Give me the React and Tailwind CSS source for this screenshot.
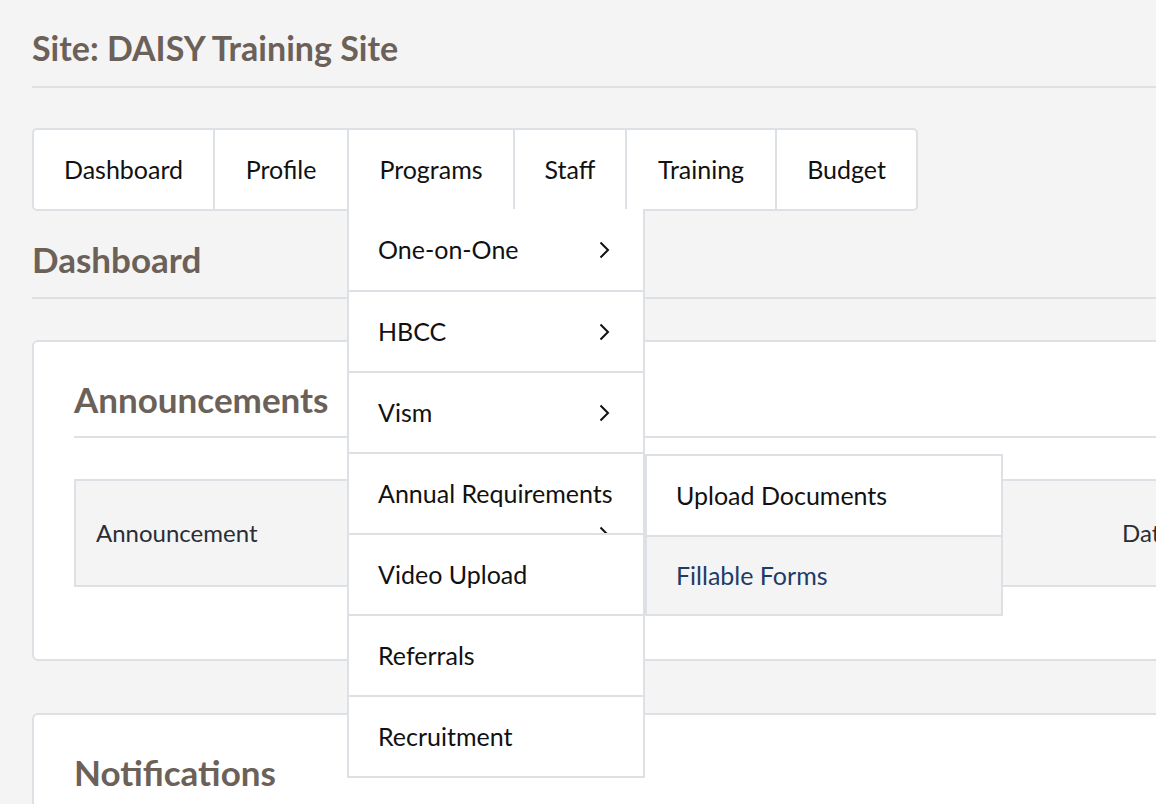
import React from "react";

const navItems = [
  { label: "Dashboard", w: "w-[179px]" },
  { label: "Profile", w: "w-[134px]" },
  { label: "Programs", w: "w-[166px]", open: true },
  { label: "Staff", w: "w-[112px]" },
  { label: "Training", w: "w-[150px]" },
  { label: "Budget", w: "w-[141px]" },
];

function Chevron({ className = "" }) {
  return (
    <svg width="11" height="18" viewBox="0 0 11 18" className={className} fill="none">
      <polyline points="1.5,1.5 9,9 1.5,16.5" stroke="#111" strokeWidth="2" />
    </svg>
  );
}

function ProgramsMenu() {
  const items = [
    { label: "One-on-One", sub: true },
    { label: "HBCC", sub: true },
    { label: "Vism", sub: true },
    { label: "Annual Requirements", wrapped: true },
    { label: "Video Upload" },
    { label: "Referrals" },
    { label: "Recruitment" },
  ];
  return (
    <div className="absolute left-[-2px] top-[79px] z-20 w-[298px] border-2 border-t-0 border-[#dde1e5] bg-white">
      {items.map((it, i) => (
        <div
          key={it.label}
          className={
            "relative flex h-[81px] items-center justify-between bg-white pl-[29px] pr-[33px] " +
            (i > 0 ? "border-t-2 border-[#dde1e5]" : "")
          }
        >
          <span className="whitespace-nowrap">{it.label}</span>
          {it.sub && <Chevron />}
          {it.wrapped && <Chevron className="absolute right-[33px] top-[72px]" />}
          {it.wrapped && (
            <div className="absolute left-[296px] top-0 z-30 w-[358px] border-2 border-[#dde1e5] bg-white">
              <div className="flex h-[79px] items-center pl-[29px]">Upload Documents</div>
              <div className="flex h-[79px] items-center border-t-2 border-[#dde1e5] bg-[#f4f4f4] pl-[29px] text-[#1d3c68]">
                Fillable Forms
              </div>
            </div>
          )}
        </div>
      ))}
    </div>
  );
}

export default function App() {
  return (
    <div
      className="h-[804px] w-[1156px] overflow-hidden bg-[#f4f4f4] text-[25px] text-[#111]"
      style={{ fontFamily: "Lato, 'Open Sans', sans-serif" }}
    >
      <div className="w-[1400px] pl-8 pt-6">
        <h1 className="border-b-2 border-[#dde1e5] pb-[14px] text-[34px] font-bold leading-[48px] text-[#6b6158]">
          Site: DAISY Training Site
        </h1>

        <nav className="mt-10 flex w-[886px] rounded-[5px] border-2 border-[#dde1e5] bg-white">
          {navItems.map((n, i) => (
            <div
              key={n.label}
              className={
                "relative flex h-[79px] items-center justify-center " +
                n.w +
                (i > 0 ? " border-l-2 border-[#dde1e5]" : "")
              }
            >
              {n.label}
              {n.open && <ProgramsMenu />}
            </div>
          ))}
        </nav>

        <h2 className="mt-6 border-b-2 border-[#dde1e5] pb-[14px] text-[35px] font-bold leading-[48px] text-[#6b6158]">
          Dashboard
        </h2>

        <section className="mt-[41px] rounded-[6px] border-2 border-[#dde1e5] bg-white pl-10 pt-[33px] pb-[72px]">
          <h3 className="border-b-2 border-[#dde1e5] pb-[13px] text-[35px] font-bold leading-[48px] text-[#6b6158]">
            Announcements
          </h3>
          <div className="mt-[41px] flex h-[108px] items-center border-2 border-[#dde1e5] bg-[#f4f4f4] text-[24px] text-[#2b2d36]">
            <div className="w-[1046px] pl-[20px]">Announcement</div>
            <div>Date</div>
          </div>
        </section>

        <section className="mt-[52px] rounded-[6px] border-2 border-[#dde1e5] bg-white pl-10 pt-[33px] pb-10">
          <h3 className="text-[35px] font-bold leading-[48px] text-[#6b6158]">Notifications</h3>
        </section>
      </div>
    </div>
  );
}
